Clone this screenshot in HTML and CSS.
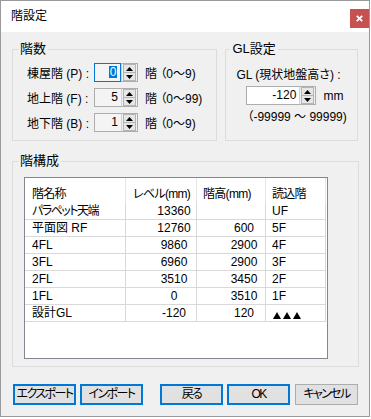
FILE: index.html
```html
<!DOCTYPE html>
<html lang="ja">
<head>
<meta charset="utf-8">
<title>階設定</title>
<link rel="stylesheet" href="styles.css">
</head>
<body>
<div class="window">
  <div class="titlebar">
    <span class="title">階設定</span>
    <div class="close"><svg width="7" height="7" viewBox="0 0 7 7"><path d="M0.8 0.8 L6.2 6.2 M6.2 0.8 L0.8 6.2" stroke="#fff" stroke-width="1.8"/></svg></div>
  </div>
  <div class="body">
    <div class="top">
      <fieldset class="group g-floors">
        <legend>階数</legend>
        <div class="frow">
          <span class="flabel">棟屋階 (P) :</span>
          <div class="spin narrow">
            <div class="spin-text focus"><span class="sel">0</span></div>
            <div class="spin-btns">
              <div class="sbtn"><svg width="7" height="4" viewBox="0 0 7 4"><polygon points="0,4 3.5,0 7,4" fill="#000"/></svg></div>
              <div class="sbtn"><svg width="7" height="4" viewBox="0 0 7 4"><polygon points="0,0 7,0 3.5,4" fill="#000"/></svg></div>
            </div>
          </div>
          <span class="range">階 （0〜9)</span>
        </div>
        <div class="frow">
          <span class="flabel">地上階 (F) :</span>
          <div class="spin narrow">
            <div class="spin-text">5</div>
            <div class="spin-btns">
              <div class="sbtn"><svg width="7" height="4" viewBox="0 0 7 4"><polygon points="0,4 3.5,0 7,4" fill="#000"/></svg></div>
              <div class="sbtn"><svg width="7" height="4" viewBox="0 0 7 4"><polygon points="0,0 7,0 3.5,4" fill="#000"/></svg></div>
            </div>
          </div>
          <span class="range">階 （0〜99)</span>
        </div>
        <div class="frow">
          <span class="flabel">地下階 (B) :</span>
          <div class="spin narrow">
            <div class="spin-text">1</div>
            <div class="spin-btns">
              <div class="sbtn"><svg width="7" height="4" viewBox="0 0 7 4"><polygon points="0,4 3.5,0 7,4" fill="#000"/></svg></div>
              <div class="sbtn"><svg width="7" height="4" viewBox="0 0 7 4"><polygon points="0,0 7,0 3.5,4" fill="#000"/></svg></div>
            </div>
          </div>
          <span class="range">階 （0〜9)</span>
        </div>
      </fieldset>
      <fieldset class="group g-gl">
        <legend>GL設定</legend>
        <div class="gl-label">GL (現状地盤高さ) :</div>
        <div class="gl-row">
          <div class="spin wide">
            <div class="spin-text white">-120</div>
            <div class="spin-btns">
              <div class="sbtn"><svg width="7" height="4" viewBox="0 0 7 4"><polygon points="0,4 3.5,0 7,4" fill="#000"/></svg></div>
              <div class="sbtn"><svg width="7" height="4" viewBox="0 0 7 4"><polygon points="0,0 7,0 3.5,4" fill="#000"/></svg></div>
            </div>
          </div>
          <span class="unit">mm</span>
        </div>
        <div class="gl-range">（-99999 〜 99999)</div>
      </fieldset>
    </div>
    <fieldset class="group g-config">
      <legend>階構成</legend>
      <div class="list">
        <table>
          <thead>
            <tr><th class="c1">階名称</th><th class="c2">レベル(mm)</th><th class="c3">階高(mm)</th><th class="c4">読込階</th></tr>
          </thead>
          <tbody>
            <tr><td class="c1 kana">パラペット天端</td><td class="c2 num">13360</td><td class="c3 num"></td><td class="c4">UF</td></tr>
            <tr><td class="c1">平面図 RF</td><td class="c2 num">12760</td><td class="c3 num">600</td><td class="c4">5F</td></tr>
            <tr><td class="c1">4FL</td><td class="c2 num">9860</td><td class="c3 num">2900</td><td class="c4">4F</td></tr>
            <tr><td class="c1">3FL</td><td class="c2 num">6960</td><td class="c3 num">2900</td><td class="c4">3F</td></tr>
            <tr><td class="c1">2FL</td><td class="c2 num">3510</td><td class="c3 num">3450</td><td class="c4">2F</td></tr>
            <tr><td class="c1">1FL</td><td class="c2 num">0</td><td class="c3 num">3510</td><td class="c4">1F</td></tr>
            <tr><td class="c1">設計GL</td><td class="c2 num">-120</td><td class="c3 num">120</td><td class="c4"><svg class="tri" width="31" height="7" viewBox="0 0 31 7"><polygon points="0,7 4,0 8,7" fill="#000"/><polygon points="10,7 14,0 18,7" fill="#000"/><polygon points="20,7 24,0 28,7" fill="#000"/></svg></td></tr>
          </tbody>
        </table>
      </div>
    </fieldset>
    <div class="buttons">
      <button class="btn def b1">エクスポート</button>
      <button class="btn def b2">インポート</button>
      <button class="btn def b3">戻る</button>
      <button class="btn def b4">OK</button>
      <button class="btn b5">キャンセル</button>
    </div>
  </div>
</div>
</body>
</html>
```
FILE: styles.css
```css
* { box-sizing: border-box; }
html, body { margin: 0; padding: 0; }
body {
  background: #fff;
  width: 371px;
  height: 419px;
  font-family: "Liberation Sans", "Noto Sans CJK JP", sans-serif;
  font-size: 12px;
  color: #000;
  font-feature-settings: "palt";
}
.window {
  width: 370px;
  height: 417px;
  border: 1px solid #9a9a9a;
  background: #f0f0f0;
  display: flex;
  flex-direction: column;
}
.titlebar {
  height: 31px;
  flex: none;
  background: #fff;
  display: flex;
  justify-content: space-between;
  align-items: flex-start;
}
.title {
  padding-left: 10px;
  line-height: 31px;
  font-size: 12px;
}
.close {
  width: 19px;
  height: 19px;
  margin-top: 8px;
  background: #c75050;
  display: flex;
  align-items: center;
  justify-content: center;
}
.close svg { display: block; }
.body { padding: 9px 11px 0; }

.top { display: flex; gap: 8px; align-items: stretch; }
.group {
  margin: 0;
  min-width: 0;
  border: 1px solid #dcdcdc;
}
.group legend {
  padding: 0 2px;
  font-size: 13px;
  line-height: 16px;
}
.g-floors { width: 206px; padding: 6px 0 8px 14px; }
.g-floors legend { margin-left: -9px; }
.g-gl { width: 133px; padding: 10px 0 0 10px; }
.g-gl legend { margin-left: -6px; }

.frow { display: flex; align-items: center; height: 19px; margin-bottom: 6px; }
.frow:last-child { margin-bottom: 0; }
.flabel { width: 67px; white-space: nowrap; }
.range { margin-left: 7px; white-space: nowrap; }

.spin { display: flex; height: 19px; }
.spin.narrow { width: 44px; }
.spin.wide { width: 70px; }
.spin-text {
  flex: 1;
  border: 1px solid #adadad;
  border-right: none;
  background: #f4f4f4;
  text-align: right;
  padding-right: 3px;
  line-height: 17px;
}
.spin-text.white { background: #fff; }
.spin-text.focus { border: 1px solid #0078d7; }
.sel {
  display: inline-block;
  background: #0078d7;
  color: #fff;
  line-height: 12px;
  padding: 0 0.5px;
}
.spin-btns {
  width: 17px;
  border: 1px solid #adadad;
  border-left: 1px solid #d0d0d0;
  background: #f0f0f0;
  display: flex;
  flex-direction: column;
  padding: 0 1px;
}
.sbtn {
  flex: 1;
  border: 1px solid #b4b4b4;
  background: #e6e6e6;
  display: flex;
  align-items: center;
  justify-content: center;
}
.sbtn + .sbtn { border-top: none; }
.sbtn svg { display: block; }

.gl-label { line-height: 16px; white-space: nowrap; }
.gl-row { display: flex; align-items: center; margin-top: 3px; margin-left: 10px; }
.unit { margin-left: 7px; }
.gl-range { margin-top: 4px; margin-left: 11px; line-height: 16px; white-space: nowrap; }

.g-config {
  width: 347px;
  margin-top: 12px;
  padding: 8px 0 7px 11px;
}
.g-config legend { margin-left: -6px; }
.list {
  width: 304px;
  height: 182px;
  border: 1px solid #828790;
  background: #fff;
}
.list table {
  border-collapse: separate;
  border-spacing: 0;
  table-layout: fixed;
  width: 301px;
}
.list th, .list td {
  box-sizing: border-box;
  padding: 0 0 0 7px;
  text-align: left;
  font-weight: normal;
  white-space: nowrap;
  overflow: hidden;
}
.list th {
  height: 25px;
  padding-top: 3px;
  border-right: 1px solid #e5e5e5;
  font-size: 12px;
  letter-spacing: -0.7px;
}
.list td {
  height: 17px;
  line-height: 16px;
  border-right: 1px solid #d9d9d9;
  border-bottom: 1px solid #d9d9d9;
}
.list td.kana { letter-spacing: -1.5px; }
.c1 { width: 101px; }
.c2 { width: 71px; }
.c3 { width: 69px; }
.c4 { width: 60px; }
.list th.c3, .list th.c4, .list td.c4 { padding-left: 6px; }
.list td.num { text-align: center; padding-left: 26px; }
.tri { display: block; margin-top: 4px; margin-left: 1px; }

.buttons { display: flex; margin-top: 17px; margin-left: 1px; }
.btn {
  width: 63px;
  height: 21px;
  margin: 0;
  padding: 0;
  background: #e1e1e1;
  border: 1px solid #adadad;
  font-family: "Liberation Sans", "Noto Sans CJK JP", sans-serif;
  font-size: 12px;
  color: #000;
  font-feature-settings: "palt";
  letter-spacing: -1.6px;
  white-space: nowrap;
  line-height: 17px;
}
.btn.def { border: 2px solid #0078d7; }
.b2 { margin-left: 4px; }
.b3 { margin-left: 17px; }
.b4 { margin-left: 4px; }
.b5 { margin-left: 5px; }
```
